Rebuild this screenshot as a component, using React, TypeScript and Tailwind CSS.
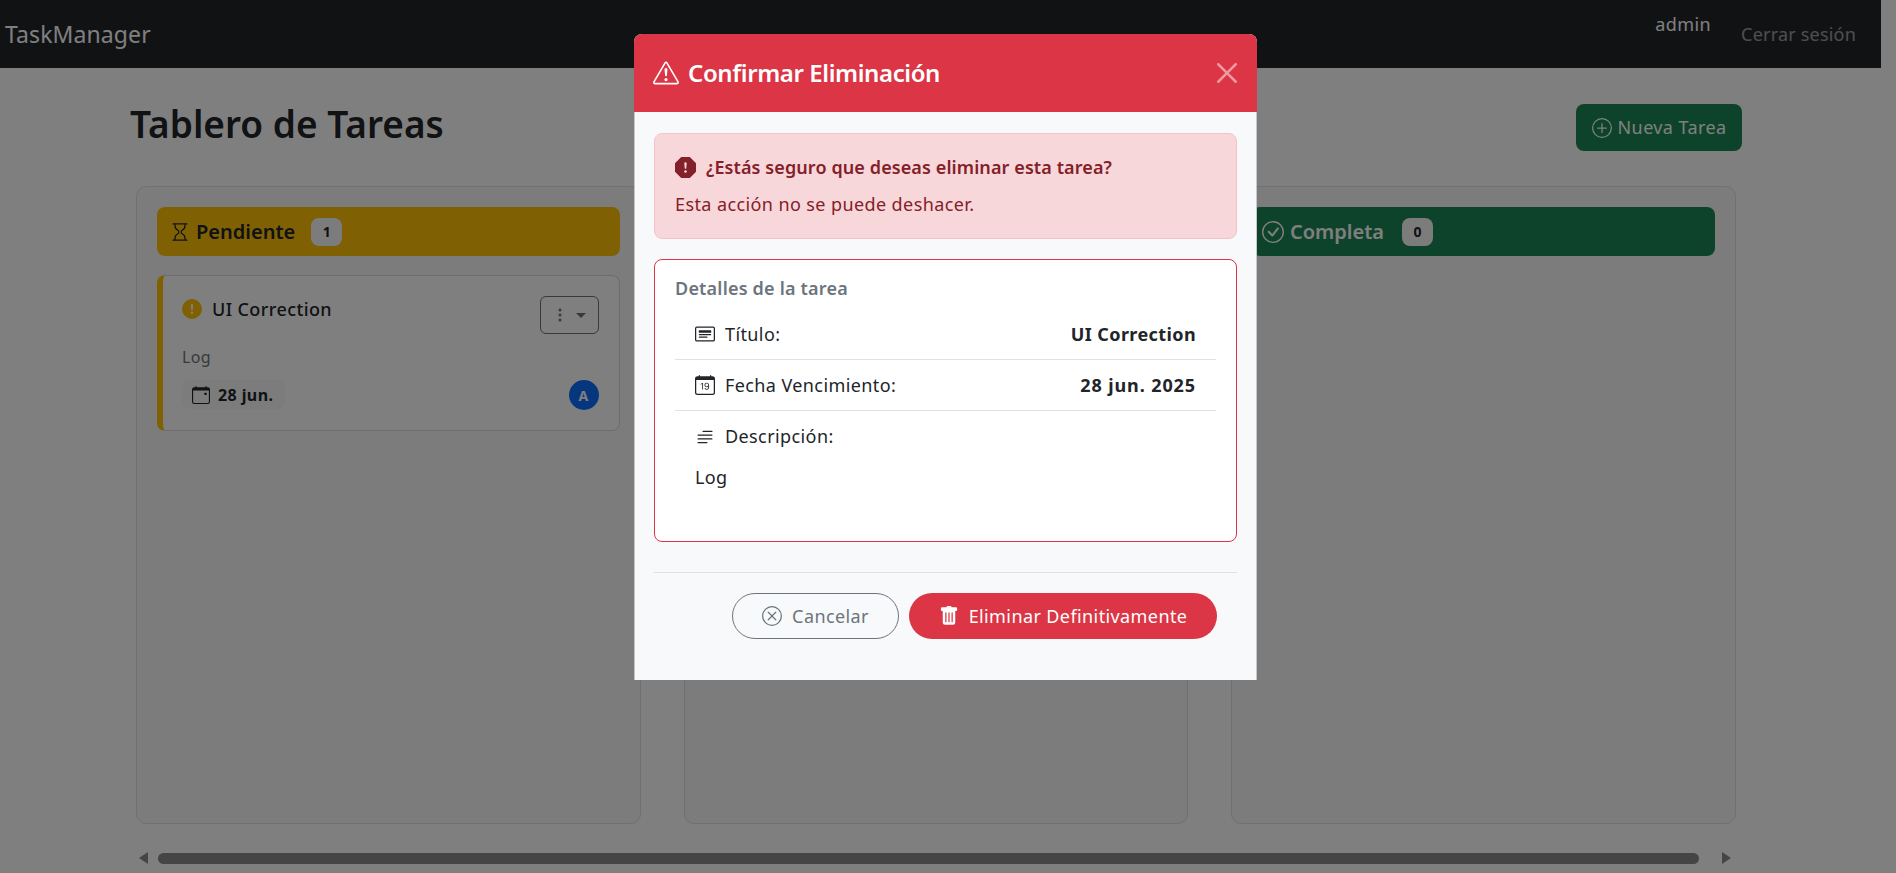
import { BsExclamationTriangle, BsExclamationOctagonFill, BsCardHeading, BsCalendarDate, BsTextParagraph, BsXCircle, BsTrashFill, BsHourglass, BsCheckCircle, BsPlusCircle, BsExclamationCircleFill, BsThreeDotsVertical, BsCalendarEvent } from 'react-icons/bs';

function Column({ children }: { children?: React.ReactNode }) {
    return (
        <div className="w-[504.5px] h-[638px] shrink-0 bg-[#f8f9fa] border border-[#dfe0e1] rounded-[10px] pt-5 px-5">
            {children}
        </div>
    );
}

export default function App() {
    return (
        <div className="w-[1896px] h-[873px] overflow-hidden bg-white text-[#212529] font-['Noto_Sans',sans-serif] text-[18px] tracking-[0.4px]">
            <nav className="w-[1881px] h-[68px] bg-[#212529] flex justify-between pl-[5px] pr-[25px]">
                <span className="text-white text-[23px] leading-[68px] tracking-[0.1px]">TaskManager</span>
                <div className="flex gap-[30px]">
                    <span className="text-white text-[18px] mt-[11px]">admin</span>
                    <span className="text-white/55 text-[18px] mt-[21px] tracking-[0.2px]">Cerrar sesión</span>
                </div>
            </nav>

            <div className="w-[1742px] pl-[130px] pt-[36px] h-[118px] flex justify-between items-start">
                <h1 className="text-[37px] font-semibold leading-[50px] tracking-normal -mt-[5px]">Tablero de Tareas</h1>
                <button className="w-[166px] h-[47px] bg-[#198754] text-white rounded-lg flex items-center justify-center gap-[6px]">
                    <BsPlusCircle className="w-5 h-5" />
                    Nueva Tarea
                </button>
            </div>

            <div className="flex gap-[43px] ml-[136px]">
                <Column>
                    <div className="h-[49px] bg-[#ffc107] rounded-lg flex items-center pl-[13px] font-semibold text-[20px] tracking-normal">
                        <BsHourglass className="w-5 h-5" />
                        <span className="ml-[6px]">Pendiente</span>
                        <span className="ml-4 w-[31px] h-7 rounded-lg bg-[#f8f9fa] flex items-center justify-center text-[14px] font-bold">1</span>
                    </div>
                    <div className="mt-[19px] h-[156px] bg-white border border-[#d9d9d9] border-l-[6px] border-l-[#ffc107] rounded-lg pl-[19px] pr-[20px] pt-[20px]">
                        <div className="flex justify-between">
                            <div className="flex items-center gap-[10px] h-[20px] mt-[3px]">
                                <BsExclamationCircleFill className="w-5 h-5 text-[#ffc107]" />
                                <span className="font-medium text-[18px]">UI Correction</span>
                            </div>
                            <button className="w-[59px] h-[38px] border border-[#6c757d] rounded-md flex items-center justify-center gap-[8px] text-[#6c757d]">
                                <BsThreeDotsVertical className="w-4 h-4" />
                                <span className="w-0 h-0 border-x-[5px] border-x-transparent border-t-[5px] border-t-[#6c757d]" />
                            </button>
                        </div>
                        <p className="text-[#6c757d] text-[16px] mt-[11px] leading-[24px]">Log</p>
                        <div className="flex justify-between mt-[11px]">
                            <div className="w-[103px] h-[29px] bg-[#f8f9fa] rounded-lg flex items-center pl-[10px] gap-[8px] font-bold text-[16px]">
                                <BsCalendarEvent className="w-[18px] h-[18px]" />
                                28 jun.
                            </div>
                            <div className="w-[30px] h-[30px] rounded-full bg-[#0d6efd] text-white flex items-center justify-center text-[14px] font-bold">A</div>
                        </div>
                    </div>
                </Column>
                <Column />
                <Column>
                    <div className="h-[49px] bg-[#198754] text-white rounded-lg flex items-center pl-[10px] font-semibold text-[20px] tracking-normal">
                        <BsCheckCircle className="w-[22px] h-[22px]" />
                        <span className="ml-[6px]">Completa</span>
                        <span className="ml-[18px] w-[31px] h-7 rounded-lg bg-[#f8f9fa] text-[#212529] flex items-center justify-center text-[14px] font-bold">0</span>
                    </div>
                </Column>
            </div>

            <div className="mt-[28px] ml-[139px] w-[1595px] h-[12px] flex items-center">
                <svg className="w-[9px] h-[12px] text-[#8b8b8b]" viewBox="0 0 9 12"><path d="M9 0v12L0 6z" fill="currentColor" /></svg>
                <div className="ml-[10px] w-[1541px] h-[11px] rounded-full bg-[#8b8b8b]" />
                <svg className="ml-[23px] w-[9px] h-[12px] text-[#8b8b8b]" viewBox="0 0 9 12"><path d="M0 0v12l9-6z" fill="currentColor" /></svg>
            </div>

            {/* backdrop + modal */}
            <div className="fixed inset-0 bg-black/50 pl-[634px] pt-[34px]">
                <div className="w-[623px] h-[646px] bg-[#f8f9fa] rounded-t-lg overflow-hidden">
                    <div className="h-[78px] bg-[#dc3545] text-white flex items-center pl-[19px] pr-5">
                        <BsExclamationTriangle className="w-[26px] h-[26px]" />
                        <span className="ml-[9px] text-[24px] font-semibold tracking-[-0.4px]">Confirmar Eliminación</span>
                        <svg className="ml-auto w-5 h-5 opacity-50" viewBox="0 0 16 16"><path d="M.293.293a1 1 0 0 1 1.414 0L8 6.586 14.293.293a1 1 0 1 1 1.414 1.414L9.414 8l6.293 6.293a1 1 0 0 1-1.414 1.414L8 9.414l-6.293 6.293a1 1 0 0 1-1.414-1.414L6.586 8 .293 1.707a1 1 0 0 1 0-1.414" fill="currentColor" /></svg>
                    </div>
                    <div className="h-[568px] border-x border-black/20 px-[19px] pt-[21px]">
                        <div className="h-[106px] bg-[#f8d7da] border border-[#f5c2c7] rounded-lg text-[#842029] px-5 pt-[19px]">
                            <div className="flex items-center gap-[10px] font-semibold h-[28px] tracking-[0.1px]">
                                <BsExclamationOctagonFill className="w-[21px] h-[21px]" />
                                ¿Estás seguro que deseas eliminar esta tarea?
                            </div>
                            <p className="mt-[7px] leading-[32px]">Esta acción no se puede deshacer.</p>
                        </div>
                        <div className="mt-5 h-[283px] bg-white border border-[#dc3545] rounded-lg pt-[15px] px-5">
                            <h6 className="text-[#6c757d] font-semibold leading-[26px] tracking-[0.2px]">Detalles de la tarea</h6>
                            <div className="mt-[7px] h-[52px] pt-[1px] border-b border-[#dee2e6] flex items-center px-5 justify-between">
                                <span className="flex items-center gap-[10px]"><BsCardHeading className="w-5 h-5" />Título:</span>
                                <span className="font-bold">UI Correction</span>
                            </div>
                            <div className="h-[51px] border-b border-[#dee2e6] flex items-center px-5 justify-between">
                                <span className="flex items-center gap-[10px]"><BsCalendarDate className="w-5 h-5" />Fecha Vencimiento:</span>
                                <span className="font-bold tracking-[0.9px]">28 jun. 2025</span>
                            </div>
                            <div className="h-[51px] flex items-center px-5">
                                <span className="flex items-center gap-[10px]"><BsTextParagraph className="w-5 h-5" />Descripción:</span>
                            </div>
                            <p className="px-5 mt-[1px] leading-[28px]">Log</p>
                        </div>
                        <div className="mt-[30px] border-t border-[#dee2e6] pt-[20px] flex justify-end gap-[10px] pr-5">
                            <button className="w-[167px] h-[46px] rounded-full border border-[#6c757d] text-[#6c757d] flex items-center justify-center gap-[10px]">
                                <BsXCircle className="w-5 h-5" />
                                Cancelar
                            </button>
                            <button className="w-[308px] h-[46px] rounded-full bg-[#dc3545] text-white flex items-center justify-center gap-[10px]">
                                <BsTrashFill className="w-5 h-5" />
                                Eliminar Definitivamente
                            </button>
                        </div>
                    </div>
                </div>
            </div>
        </div>
    );
}
